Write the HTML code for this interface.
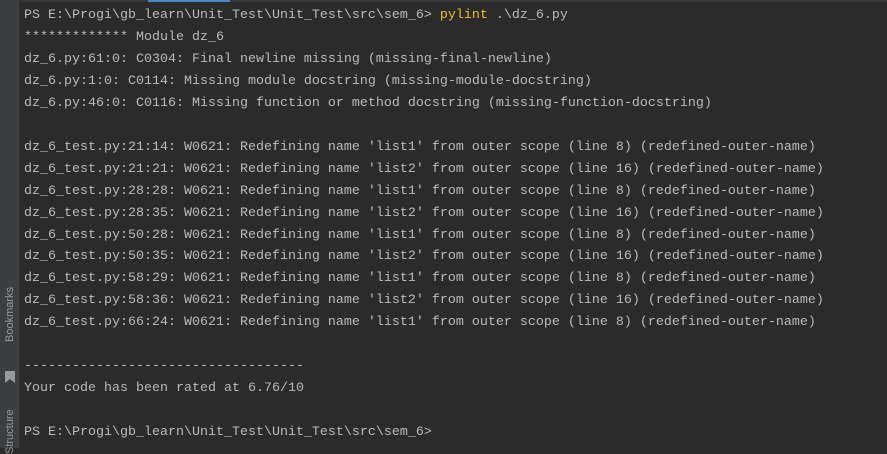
<!DOCTYPE html>
<html><head><meta charset="utf-8"><style>
html,body{margin:0;padding:0;width:887px;height:448px;overflow:hidden;background:#2b2b2b}
.side{position:absolute;left:0;top:0;width:19px;height:448px;background:#3c3f41;border-right:1px solid #323232}
.topbar{position:absolute;left:148px;top:0;width:82px;height:2px;background:#4a88c7}
.topline{position:absolute;left:20px;top:0;width:867px;height:2px;background:#333537}
pre{position:absolute;left:24px;top:5px;margin:0;font-family:"Liberation Mono",monospace;font-size:13.33px;line-height:21.95px;color:#bbbbbb}
.y{color:#e8bf2a}
.v{position:absolute;font-family:"Liberation Sans",sans-serif;font-size:11px;color:#9a9a9a;transform:rotate(-90deg);transform-origin:left top;white-space:nowrap}
</style></head><body>
<div class="topline"></div><div class="topbar"></div>
<div class="side">
<div class="v" style="left:4px;top:342px">Bookmarks</div>
<svg style="position:absolute;left:5px;top:371px" width="10" height="12"><path d="M0 0H10V12L5 8L0 12Z" fill="#9a9a9a"/></svg>
<div class="v" style="left:4px;top:454px">Structure</div>
</div>
<pre>PS E:\Progi\gb_learn\Unit_Test\Unit_Test\src\sem_6&gt; <span class="y">pylint</span> .\dz_6.py
************* Module dz_6
dz_6.py:61:0: C0304: Final newline missing (missing-final-newline)
dz_6.py:1:0: C0114: Missing module docstring (missing-module-docstring)
dz_6.py:46:0: C0116: Missing function or method docstring (missing-function-docstring)

dz_6_test.py:21:14: W0621: Redefining name 'list1' from outer scope (line 8) (redefined-outer-name)
dz_6_test.py:21:21: W0621: Redefining name 'list2' from outer scope (line 16) (redefined-outer-name)
dz_6_test.py:28:28: W0621: Redefining name 'list1' from outer scope (line 8) (redefined-outer-name)
dz_6_test.py:28:35: W0621: Redefining name 'list2' from outer scope (line 16) (redefined-outer-name)
dz_6_test.py:50:28: W0621: Redefining name 'list1' from outer scope (line 8) (redefined-outer-name)
dz_6_test.py:50:35: W0621: Redefining name 'list2' from outer scope (line 16) (redefined-outer-name)
dz_6_test.py:58:29: W0621: Redefining name 'list1' from outer scope (line 8) (redefined-outer-name)
dz_6_test.py:58:36: W0621: Redefining name 'list2' from outer scope (line 16) (redefined-outer-name)
dz_6_test.py:66:24: W0621: Redefining name 'list1' from outer scope (line 8) (redefined-outer-name)

-----------------------------------
Your code has been rated at 6.76/10

PS E:\Progi\gb_learn\Unit_Test\Unit_Test\src\sem_6&gt;</pre>
</body></html>
